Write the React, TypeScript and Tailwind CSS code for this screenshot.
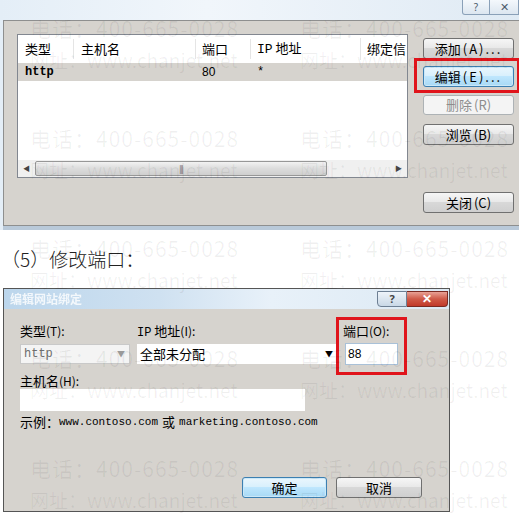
import React from "react";

const cjk = { fontFamily: '"Noto Sans CJK SC", "Liberation Sans", sans-serif' };
const mono = { fontFamily: '"Liberation Mono", "Noto Sans CJK SC", monospace' };

const btn =
  "flex items-center justify-center rounded-[3px] border border-[#707070] bg-[linear-gradient(#f6f6f6,#e9e9e9_45%,#d8d8d8_50%,#cfcfcf)] text-[13px] text-black";
const btnFocus =
  "flex items-center justify-center rounded-[3px] border border-[#3c7fb1] bg-[linear-gradient(#eaf6fd,#d9f0fc_45%,#bee6fd_50%,#a7d9f5)] text-[13px] text-black shadow-[inset_0_0_0_1px_#cbe8f8]";

const Watermarks = () => {
  const rows = [30, 140, 250, 360, 470];
  return (
    <div className="pointer-events-none absolute inset-0 whitespace-nowrap text-black/[0.06]" style={cjk}>
      {rows.map((y) => (
        <React.Fragment key={y}>
          <div className="absolute left-[30px] text-[21px] leading-none tracking-[1px]" style={{ top: y - 12 }}>
            电话：400-665-0028
          </div>
          <div className="absolute left-[30px] text-[19px] leading-none" style={{ top: y + 20 }}>
            网址：www.chanjet.net
          </div>
          <div className="absolute left-[300px] text-[21px] leading-none tracking-[1px]" style={{ top: y - 12 }}>
            电话：400-665-0028
          </div>
          <div className="absolute left-[300px] text-[19px] leading-none" style={{ top: y + 20 }}>
            网址：www.chanjet.net
          </div>
        </React.Fragment>
      ))}
    </div>
  );
};

const TopDialog = () => (
  <div className="flex h-[230px] flex-col bg-[linear-gradient(90deg,#e4eef7,#f1f6fb_40%,#dfeaf4)] pl-[3px]">
    <div className="relative h-[20px] shrink-0">
      <div className="absolute right-0 top-0 flex h-[15px]">
        <div className="flex w-[28px] items-center justify-center rounded-bl-[3px] border border-t-0 border-[#8aa0b8] bg-[linear-gradient(#f4f8fc,#dce6f0)] text-[10px] text-[#4a5a6a]">
          ?
        </div>
        <div className="flex w-[29px] items-center justify-center border border-l-0 border-t-0 border-[#8aa0b8] bg-[linear-gradient(#f4f8fc,#dce6f0)] text-[11px] text-[#4a5a6a]">
          ✕
        </div>
      </div>
    </div>
    <div className="relative flex flex-1 border border-r-0 border-[#8e8f8f] bg-[#d6d3ce] pl-[13px] pt-[13px]" style={cjk}>
      <div className="flex h-[144px] w-[391px] flex-col border border-[#828790] bg-white">
        <div className="flex h-[28px] items-center text-[13px] text-black">
          <div className="w-[56px] border-r border-[#e5e5e5] pl-[7px]">类型</div>
          <div className="w-[122px] border-r border-[#e5e5e5] pl-[7px]">主机名</div>
          <div className="w-[55px] border-r border-[#e5e5e5] pl-[6px]">端口</div>
          <div className="w-[110px] border-r border-[#e5e5e5] pl-[6px]">
            <span style={mono}>IP</span> 地址
          </div>
          <div className="pl-[6px]">绑定信</div>
        </div>
        <div className="flex h-[18px] items-center bg-[#d6d3ce] text-[12px] text-black">
          <div className="w-[178px] pl-[7px] font-bold" style={mono}>http</div>
          <div className="w-[55px] pl-[6px]" style={{ fontFamily: '"Liberation Sans", sans-serif' }}>80</div>
          <div className="pl-[6px]" style={mono}>*</div>
        </div>
        <div className="flex-1" />
        <div className="flex h-[17px] items-center bg-[#f0f0f0]">
          <div className="flex w-[17px] justify-center text-[7px] text-[#444]">◀</div>
          <div className="flex h-[15px] w-[292px] items-center justify-center rounded-[2px] border border-[#979797] bg-[linear-gradient(#f2f2f2,#dcdcdc_50%,#cfcfcf)] text-[8px] leading-none tracking-[-1px] text-[#555]">
            |||
          </div>
          <div className="flex-1" />
          <div className="flex w-[17px] justify-center text-[7px] text-[#444]">▶</div>
        </div>
      </div>
      <div className="ml-[15px] flex w-[91px] flex-col pt-[4px]">
        <div className={`${btn} h-[21px]`}>添加<span className="ml-[2px] tracking-[2px]">(A)...</span></div>
        <div className={`${btnFocus} mt-[7px] h-[21px]`}>编辑<span className="ml-[2px] tracking-[2px]">(E)...</span></div>
        <div className="mt-[8px] flex h-[20px] items-center justify-center rounded-[3px] border border-[#adb2b5] bg-[#f4f4f4] text-[13px] text-[#8d8d8d]">
          删除<span className="ml-[2px]">(R)</span>
        </div>
        <div className={`${btn} mt-[9px] h-[21px]`}>浏览<span className="ml-[2px]">(B)</span></div>
        <div className={`${btn} mt-[47px] h-[21px]`}>关闭<span className="ml-[2px]">(C)</span></div>
      </div>
      <div className="pointer-events-none absolute left-[410px] top-[37px] h-[35px] w-[106px] border-[3px] border-[#e0141b]" />
    </div>
    <div className="h-[4px] shrink-0 bg-[#b9c9d9]" />
  </div>
);

const BottomDialog = () => (
  <div className="ml-[3px] flex h-[224px] w-[447px] flex-col border border-[#555] bg-[linear-gradient(90deg,#bcd6ec,#cfe1f1_35%,#e8f1f9_60%,#dce9f4)]">
    <div className="relative flex h-[20px] shrink-0 items-center pl-[6px]">
      <span className="text-[12px] font-bold text-white/80 blur-[0.6px]" style={cjk}>编辑网站绑定</span>
      <div className="absolute right-[1px] top-[2px] flex h-[16px]">
        <div className="flex w-[30px] items-center justify-center rounded-bl-[4px] border border-[#6d7f93] bg-[linear-gradient(#eef4fa,#c9d8e6)] text-[11px] font-bold text-[#444]">
          ?
        </div>
        <div className="flex w-[41px] items-center justify-center rounded-br-[4px] border border-l-0 border-[#7a2a22] bg-[linear-gradient(#e8a195,#cf5a48_50%,#c13a2a)] text-[12px] font-bold text-white">
          ✕
        </div>
      </div>
    </div>
    <div className="relative flex flex-1 flex-col bg-[#d6d3ce] px-[16px] pt-[12px] text-[13px] text-black" style={cjk}>
      <div className="flex h-[20px] items-center">
        <div className="w-[117px]">类型<span className="text-[12px]">(T):</span></div>
        <div className="w-[206px]"><span style={mono} className="text-[12px]">IP</span> 地址<span className="text-[12px]">(I):</span></div>
        <div>端口<span className="text-[12px]">(O):</span></div>
      </div>
      <div className="mt-[2px] flex h-[22px] items-center">
        <div className="flex h-[20px] w-[110px] items-center justify-between border border-[#c9c9c9] bg-[#f4f4f4] pl-[3px] pr-[4px]">
          <span className="text-[12px] text-[#6d6d6d]" style={mono}>http</span>
          <span className="text-[8px] text-[#9a9a9a]">▼</span>
        </div>
        <div className="ml-[7px] flex h-[20px] w-[199px] items-center justify-between bg-white pl-[3px] pr-[3px]">
          <span>全部未分配</span>
          <span className="text-[8px] text-black">▼</span>
        </div>
        <div className="ml-[9px] flex h-[22px] w-[53px] items-center border border-[#a9c1d8] bg-white pl-[2px] text-[12px]" style={{ fontFamily: '"Liberation Sans", sans-serif' }}>
          88
        </div>
      </div>
      <div className="mt-[6px] h-[18px]">主机名<span className="text-[12px]">(H):</span></div>
      <div className="h-[22px] w-[285px] bg-white" />
      <div className="mt-[1px] flex h-[20px] items-center">
        示例：<span className="text-[11px]" style={mono}>www.contoso.com</span>
        <span className="mx-[4px]">或</span>
        <span className="text-[11px]" style={mono}>marketing.contoso.com</span>
      </div>
      <div className="flex-1" />
      <div className="mb-[13px] flex justify-end pr-[11px]">
        <div className={`${btnFocus} h-[21px] w-[85px]`}>确定</div>
        <div className={`${btn} ml-[9px] h-[21px] w-[86px]`}>取消</div>
      </div>
      <div className="pointer-events-none absolute left-[332px] top-[8px] h-[58px] w-[71px] border-[3px] border-[#e0141b]" />
    </div>
  </div>
);

export default function App() {
  return (
    <div className="relative h-[522px] w-[519px] overflow-hidden bg-white">
      <TopDialog />
      <div className="flex h-[58px] items-center pl-[1px] text-[19px] font-light text-[#222]" style={cjk}>
        （5）修改端口：
      </div>
      <BottomDialog />
      <Watermarks />
    </div>
  );
}
